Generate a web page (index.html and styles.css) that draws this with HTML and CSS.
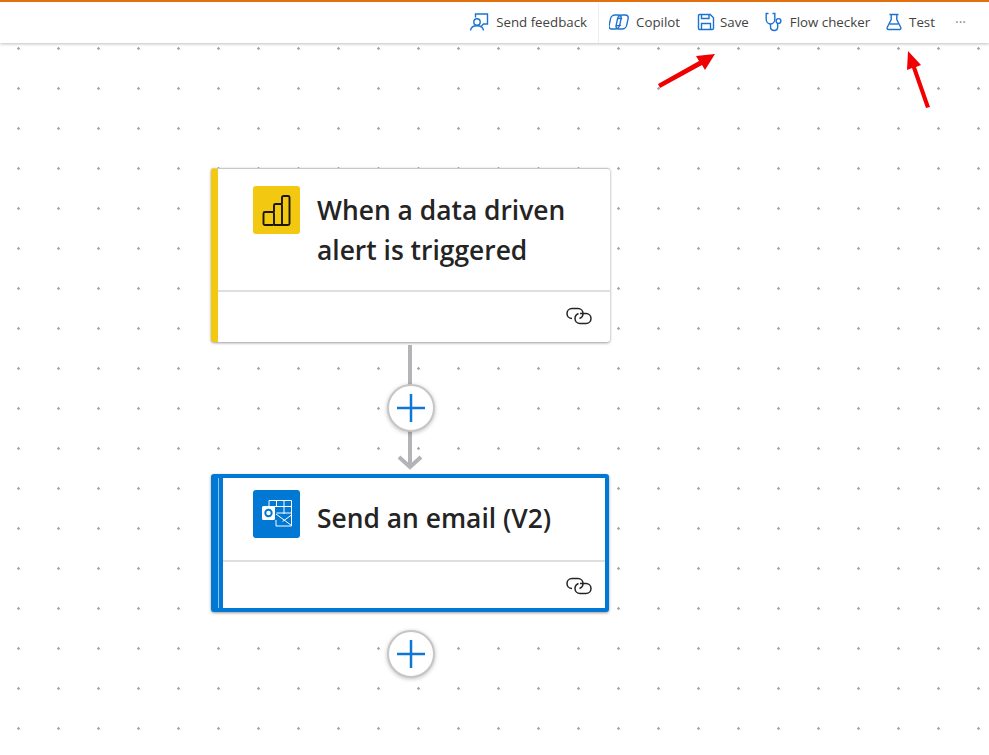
FILE: index.html

```html
<!DOCTYPE html>
<html lang="en">
<head>
    <meta charset="UTF-8">
    <meta name="viewport" content="width=device-width, initial-scale=1.0">
    <title>Flow designer</title>
    <link rel="stylesheet" href="styles.css">
</head>
<body>
    <!-- Top command bar -->
    <div class="toolbar">
        <button type="button" class="tool-btn feedback">
            <svg class="tool-icon" width="20" height="20" viewBox="0 0 20 20" fill="none">
                <circle cx="8" cy="10" r="3.200"/>
                <path d="M1.500 18.500c.4-3 3-4.700 6.500-4.700s6 1.700 6.500 4.700"/>
                <path d="M6.500 5.500V2h12v10h-4l-2 2"/>
            </svg>
            <span>Send feedback</span>
        </button>
        <div class="tool-sep"></div>
        <button type="button" class="tool-btn copilot">
            <svg class="tool-icon" width="20" height="20" viewBox="0 0 20 20" fill="none">
                <rect x="1" y="3" width="10.500" height="14" rx="3.500" transform="skewX(-12) translate(2 0)"/>
                <rect x="8" y="3" width="10.500" height="14" rx="3.500" transform="skewX(-12) translate(2 0)"/>
                <path d="M8 7c1.500-1 3.500-1 5 0M7 13c1.500 1 3.500 1 5 0"/>
            </svg>
            <span>Copilot</span>
        </button>
        <button type="button" class="tool-btn save">
            <svg class="tool-icon" width="18" height="18" viewBox="0 0 18 18" fill="none">
                <path d="M1.500 2.700c0-.7.500-1.200 1.200-1.200h10.500l3.300 3.300v10.500c0 .7-.5 1.200-1.200 1.200H2.700c-.7 0-1.200-.5-1.200-1.200z"/>
                <path d="M4.500 1.500v4h7.500v-4M4.500 16.500v-6h9v6"/>
            </svg>
            <span>Save</span>
        </button>
        <button type="button" class="tool-btn checker">
            <svg class="tool-icon" width="18" height="20" viewBox="0 0 18 20" fill="none">
                <path d="M3.500 1.500H1.200v5.500c0 3 1.900 5 4.300 5s4.300-2 4.300-5V1.500H7.500"/>
                <path d="M5.500 12v2.500c0 2.300 1.500 4 3.700 4s3.500-1.700 3.500-4v-3"/>
                <circle cx="13.500" cy="9" r="2.400"/>
            </svg>
            <span>Flow checker</span>
        </button>
        <button type="button" class="tool-btn test">
            <svg class="tool-icon" width="16" height="18" viewBox="0 0 16 18" fill="none">
                <path d="M3.500 1.500h9M5.200 1.500v5L1.300 14.300c-.6 1.300 0 2.200 1.300 2.200h10.800c1.300 0 1.900-.9 1.300-2.200L10.800 6.500v-5"/>
                <path d="M3.500 11h9"/>
            </svg>
            <span>Test</span>
        </button>
        <button type="button" class="tool-btn more">···</button>
    </div>

    <!-- Flow canvas -->
    <div class="canvas">
        <div class="node node-trigger">
            <div class="node-main">
                <div class="node-icon">
                    <svg width="29" height="31" viewBox="0 0 29 31" fill="none" stroke="#1a1608" stroke-width="1.900">
                        <rect x="1.500" y="17" width="10.500" height="13" rx="1.500"/>
                        <path d="M12 30h8V10.500c0-1-.6-1.500-1.500-1.500h-5c-1 0-1.500.5-1.500 1.500V17"/>
                        <path d="M20 9V2.500c0-1 .6-1.500 1.500-1.500h4.500c1 0 1.500.5 1.500 1.500v26c0 1-.5 1.500-1.500 1.500h-6"/>
                    </svg>
                </div>
                <div class="node-title">When a data driven alert is triggered</div>
            </div>
            <div class="node-foot">
                <svg class="link-icon" width="26" height="18" viewBox="0 0 26 18" fill="none" stroke="#242424" stroke-width="1.500">
                    <path d="M6 11.500c-2.800 0-5-2.200-5-5s2.200-5 5-5h6c2.800 0 5 2.200 5 5s-1.600 4.300-3.500 5"/>
                    <path d="M14 6.500h6c2.800 0 5 2.200 5 5s-2.200 5-5 5h-6c-2.800 0-5-2.200-5-5s1.600-4.300 3.500-5"/>
                </svg>
            </div>
        </div>

        <div class="connector"></div>
        <svg class="arrow-head" width="28" height="16" viewBox="0 0 28 16" fill="none" stroke="#b3b3b8" stroke-width="4">
            <path d="M3 3l11 10L25 3"/>
        </svg>
        <button type="button" class="add-btn add-first">
            <svg width="32" height="32" viewBox="0 0 32 32" stroke="#0f78d4" stroke-width="2.500"><path d="M16 2v28M2 16h28"/></svg>
        </button>

        <div class="node node-action">
            <div class="node-main">
                <div class="node-icon">
                    <svg width="32" height="30" viewBox="0 0 32 30" fill="none" stroke="#fff" stroke-width="1">
                        <path d="M8 7V1.500h22.500V27H15V21"/>
                        <path d="M13 7.500h17.500M15.500 1.500V7M23 1.500V15M15.500 14h15"/>
                        <path d="M15 15l15.500 11.500M30.500 16l-9 6.500"/>
                        <rect x="1" y="7" width="13" height="14" rx="1.500" fill="#fff" stroke="none"/>
                        <circle cx="7.500" cy="14" r="3.200" stroke="#0078d4" stroke-width="2"/>
                    </svg>
                </div>
                <div class="node-title">Send an email (V2)</div>
            </div>
            <div class="node-foot">
                <svg class="link-icon" width="26" height="18" viewBox="0 0 26 18" fill="none" stroke="#242424" stroke-width="1.500">
                    <path d="M6 11.500c-2.800 0-5-2.200-5-5s2.200-5 5-5h6c2.800 0 5 2.200 5 5s-1.600 4.300-3.500 5"/>
                    <path d="M14 6.500h6c2.800 0 5 2.200 5 5s-2.200 5-5 5h-6c-2.800 0-5-2.200-5-5s1.600-4.300 3.500-5"/>
                </svg>
            </div>
        </div>

        <button type="button" class="add-btn add-last">
            <svg width="32" height="32" viewBox="0 0 32 32" stroke="#0f78d4" stroke-width="2.500"><path d="M16 2v28M2 16h28"/></svg>
        </button>

        <!-- Red annotation arrows -->
        <svg class="marks" width="989" height="755" viewBox="0 0 989 755" fill="#f00000" stroke="none">
            <path d="M658 84l41-23-3-5 19-2-10 16-3-5-42 23z"/>
            <path d="M926 108l-14-40-5 2 1-19 13 14-5 2 14 40z"/>
        </svg>
    </div>
</body>
</html>
```

FILE: styles.css

```css
* {
    margin: 0;
    padding: 0;
    box-sizing: border-box;
}

body {
    font-family: 'Open Sans', 'Noto Sans', sans-serif;
    background: white;
    height: 755px;
    overflow: hidden;
}

.toolbar {
    height: 43px;
    background: white;
    border-top: 2px solid #e3700f;
    box-shadow: 0 1px 3px rgba(0,0,0,0.25);
    display: flex;
    align-items: center;
    justify-content: flex-end;
    padding-right: 23px;
    position: relative;
    z-index: 2;
}

.tool-btn {
    display: flex;
    align-items: center;
    gap: 7px;
    background: none;
    border: none;
    font-family: inherit;
    font-size: 13.300px;
    color: #424242;
    white-space: nowrap;
    position: relative;
    top: -1px;
}

.tool-icon {
    stroke: #1a73d0;
    stroke-width: 1.400;
}

.tool-sep {
    width: 1px;
    height: 40px;
    background: #eeeeee;
    margin: 0 10px 0 11px;
}

.copilot { margin-right: 17px; }
.save { margin-right: 16px; gap: 5px; }
.checker { margin-right: 16px; }
.test { margin-right: 20px; }

.more {
    font-size: 14px;
    color: #8a8a8a;
    letter-spacing: 0;
}

.canvas {
    position: relative;
    height: 712px;
    background-color: white;
    background-image: radial-gradient(circle at 1.500px 1.500px, #a9a9a9 1.100px, transparent 1.500px);
    background-size: 40px 40px;
    background-position: 17px 4px;
}

/* nodes sit on a free canvas, so they are placed by coordinates */
.node {
    position: absolute;
    left: 211px;
    width: 399px;
    background: white;
    border-radius: 3px;
    box-shadow: 0 1px 3px rgba(0,0,0,0.4);
    display: flex;
    flex-direction: column;
}

.node-trigger {
    top: 125px;
    height: 174px;
    border-left: 7px solid #f2c811;
    border-top: 1px solid #c8c8c8;
}

.node-action {
    top: 431px;
    width: 398px;
    height: 138px;
    border: 4px solid #0078d4;
    border-left-width: 7px;
}

.node-action::before {
    content: "";
    position: absolute;
    left: 0;
    top: 0;
    bottom: 0;
    width: 4px;
    background: #0078d4;
    border-left: 1px solid #8fc4ec;
}

.node-main {
    flex: 1;
    display: flex;
    align-items: flex-start;
    gap: 17px;
    padding: 17px 30px 0 35px;
}

.node-action .node-main {
    padding-top: 12px;
}

.node-icon {
    width: 47px;
    height: 48px;
    flex-shrink: 0;
    border-radius: 3px;
    display: flex;
    align-items: center;
    justify-content: center;
}

.node-trigger .node-icon { background: #f2c811; }
.node-action .node-icon { background: #0078d4; }

.node-title {
    font-size: 26.400px;
    line-height: 40px;
    font-weight: 600;
    color: #242424;
    padding-top: 4px;
}

.node-action .node-title {
    padding-top: 8px;
}

.node-foot {
    height: 52px;
    border-top: 2px solid #e1dfdd;
    display: flex;
    align-items: center;
    justify-content: flex-end;
    padding-right: 18px;
    padding-bottom: 2px;
}

.node-action .node-foot {
    height: 48px;
    padding-right: 13px;
    padding-bottom: 0;
    padding-top: 1px;
}

.connector {
    position: absolute;
    left: 408px;
    top: 302px;
    width: 4px;
    height: 120px;
    background: #b3b3b8;
}

.arrow-head {
    position: absolute;
    left: 396px;
    top: 411px;
}

.add-btn {
    position: absolute;
    left: 387px;
    width: 48px;
    height: 48px;
    border-radius: 50%;
    background: white;
    border: 2px solid #c8c6c4;
    box-shadow: 0 1px 4px rgba(0,0,0,0.25);
    display: flex;
    align-items: center;
    justify-content: center;
}

.add-first { top: 341px; }
.add-last { top: 587px; }

.marks {
    position: absolute;
    left: 0;
    top: -43px;
    z-index: 3;
    pointer-events: none;
}
```
